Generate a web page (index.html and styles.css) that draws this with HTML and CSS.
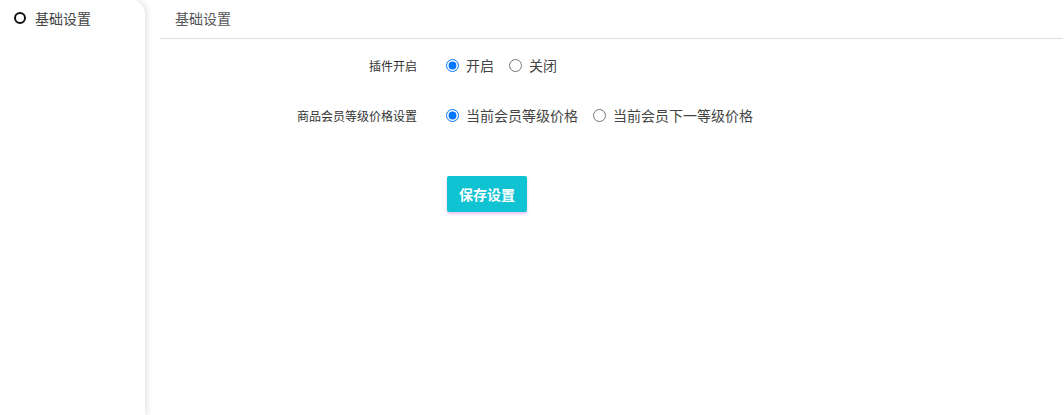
FILE: index.html
```html
<!DOCTYPE html>
<html lang="zh-CN">

<head>
  <meta charset="UTF-8">
  <meta name="viewport" content="width=device-width, initial-scale=1.0">
  <title>基础设置</title>
  <link rel="stylesheet" href="styles.css">
</head>

<body>
  <div class="page">
    <div class="side">
      <div class="side-item">
        <span class="dot"></span>
        <span>基础设置</span>
      </div>
    </div>
    <div class="main">
      <div class="main-head">基础设置</div>
      <form class="form">
        <div class="row">
          <label class="row-label">插件开启</label>
          <div class="row-field">
            <label class="radio"><input type="radio" name="open" checked> 开启</label>
            <label class="radio"><input type="radio" name="open"> 关闭</label>
          </div>
        </div>
        <div class="row">
          <label class="row-label">商品会员等级价格设置</label>
          <div class="row-field">
            <label class="radio"><input type="radio" name="price" checked> 当前会员等级价格</label>
            <label class="radio"><input type="radio" name="price"> 当前会员下一等级价格</label>
          </div>
        </div>
        <div class="row row-btn">
          <span class="row-label"></span>
          <div class="row-field">
            <button type="button" class="btn">保存设置</button>
          </div>
        </div>
      </form>
    </div>
  </div>
</body>

</html>
```

FILE: styles.css
```css
* {
  padding: 0px;
  margin: 0px;
  box-sizing: border-box;
}

body {
  font-family: "Noto Sans CJK SC", "Liberation Sans", sans-serif;
  color: #333;
  background: #fff;
}

.page {
  display: flex;
  height: 415px;
  gap: 15px;
}

/* 左侧菜单 */
.side {
  width: 145px;
  flex: none;
  background: #fff;
  border-top-right-radius: 14px;
  box-shadow: 2px 0px 6px rgba(0, 0, 0, .12);
}

.side-item {
  display: flex;
  align-items: center;
  height: 36px;
  padding-left: 14px;
  font-size: 14px;
  color: #444;
}

.dot {
  width: 12px;
  height: 12px;
  border: 2px solid #111;
  border-radius: 50%;
  margin-right: 9px;
}

/* 右侧内容 */
.main {
  flex: 1;
  margin-right: 1px;
}

.main-head {
  height: 39px;
  line-height: 36px;
  padding-left: 15px;
  font-size: 14px;
  color: #555;
  border-bottom: 1px solid #ddd;
}

.form {
  padding-top: 15px;
}

.row {
  display: flex;
  align-items: center;
  height: 22px;
  margin-bottom: 28px;
}

.row-label {
  width: 257px;
  flex: none;
  text-align: right;
  font-size: 12px;
  color: #333;
}

.row-field {
  display: flex;
  align-items: center;
  gap: 15px;
  padding-left: 29px;
}

.radio {
  display: flex;
  align-items: center;
  font-size: 14px;
  color: #444;
  gap: 7px;
}

.radio input {
  margin: 0px;
  width: 13px;
  height: 13px;
}

.row-btn {
  height: 36px;
  margin-top: 50px;
}

.btn {
  width: 80px;
  height: 36px;
  margin-left: 1px;
  border: none;
  border-radius: 2px;
  background: #0fc3d3;
  color: #fff;
  font-family: inherit;
  font-size: 14px;
  font-weight: bold;
  box-shadow: 0px 2px 3px rgba(180, 80, 220, .35);
  cursor: pointer;
}
```
